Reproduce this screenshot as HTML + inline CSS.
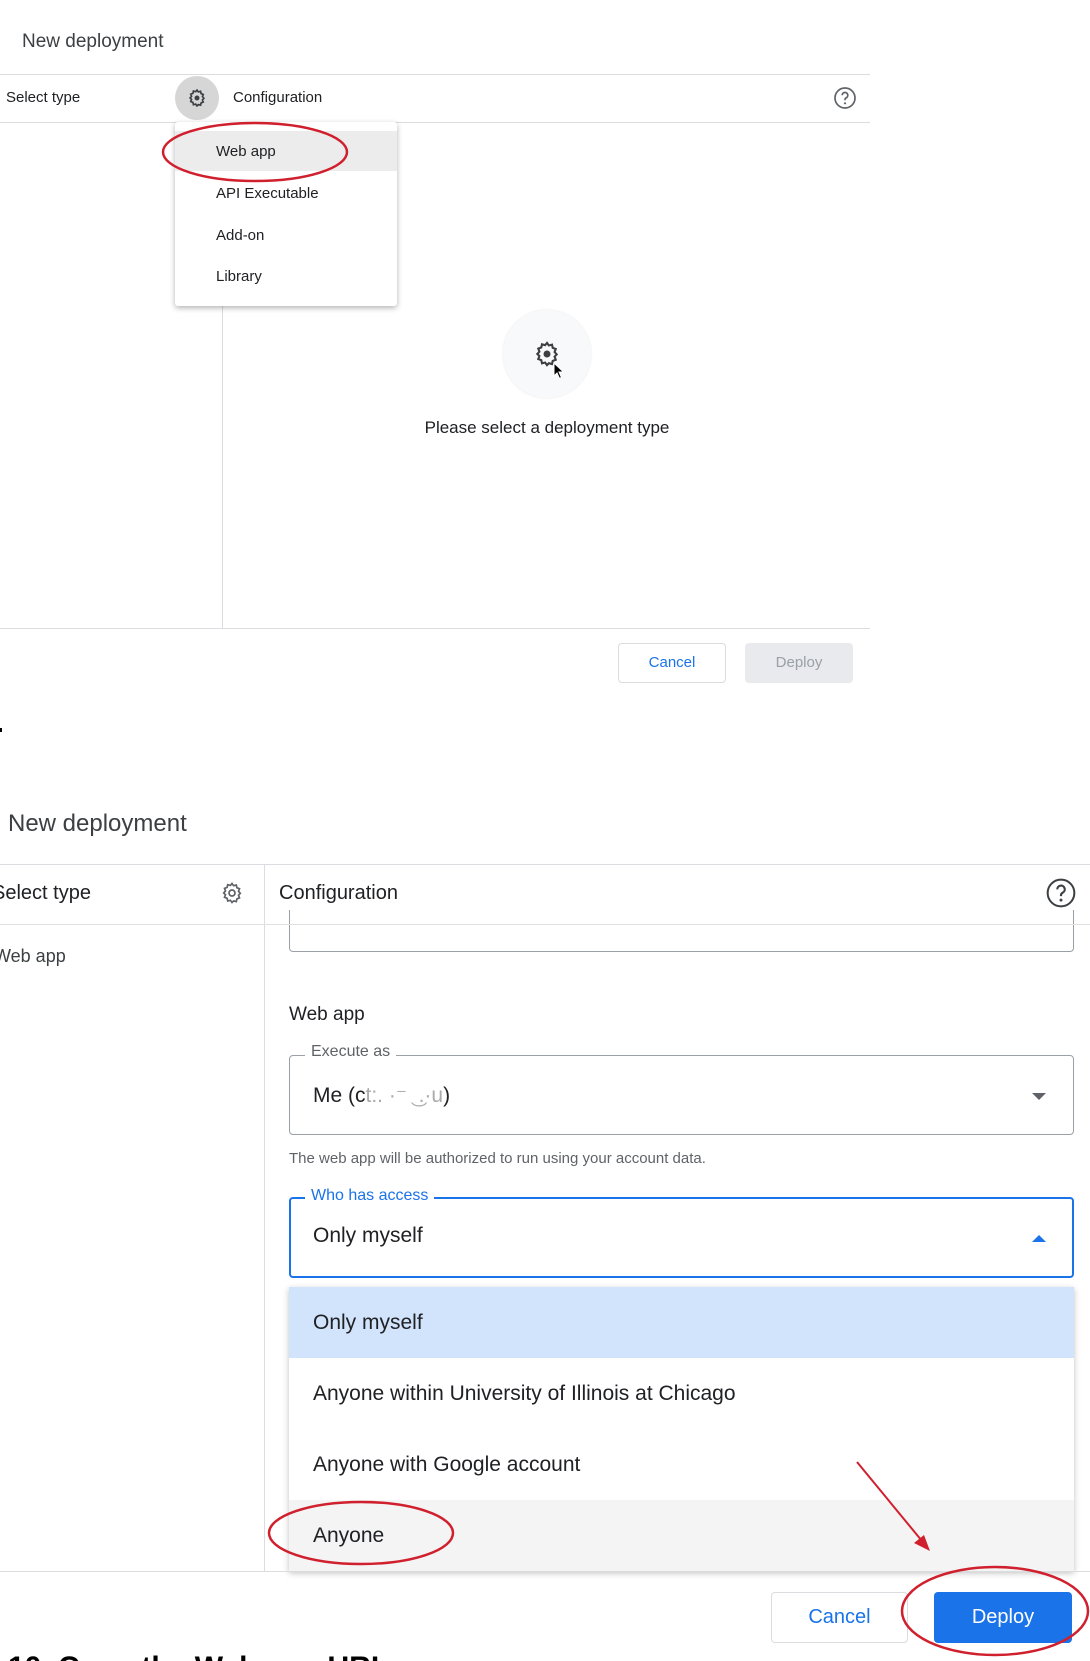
<!DOCTYPE html>
<html style="width:1090px;height:1661px;overflow:hidden"><head><meta charset="utf-8"><style>
*{margin:0;padding:0;box-sizing:border-box}
body{width:1090px;height:1661px;overflow:hidden;background:#fff;font-family:"Liberation Sans",sans-serif;color:#3c4043;position:relative}
.a{position:absolute;white-space:nowrap}
.hl{position:absolute;height:1px;background:#dadce0}
.vl{position:absolute;width:1px;background:#dadce0}
</style></head><body>
<div class="a" style="left:22px;top:31px;font-size:19px;color:#3c4043">New deployment</div>
<div class="hl" style="left:0;top:74px;width:870px"></div>
<div class="a" style="left:6px;top:89px;font-size:15px;color:#202124">Select type</div>
<div class="a" style="left:175px;top:76px;width:44px;height:44px;border-radius:50%;background:#d6d6d6"></div>
<svg class="a" style="left:187px;top:88px" width="20" height="20" viewBox="0 0 24 24"><path fill="none" stroke="#3c4043" stroke-width="2" d="M12 2.5l1.6 2.2 2.7-.7.6 2.7 2.6 1-1 2.6 1.8 2-1.8 2 1 2.6-2.6 1-.6 2.7-2.7-.7L12 21.5l-1.6-2.2-2.7.7-.6-2.7-2.6-1 1-2.6L3.7 12l1.8-2-1-2.6 2.6-1 .6-2.7 2.7.7z"/><circle cx="12" cy="12" r="3" fill="#3c4043"/></svg>
<div class="a" style="left:233px;top:89px;font-size:15px;color:#202124">Configuration</div>
<svg class="a" style="left:833px;top:86px" width="24" height="24" viewBox="0 0 24 24"><circle cx="12" cy="12" r="10" fill="none" stroke="#5f6368" stroke-width="1.7"/><path d="M9.2 9.3a2.8 2.8 0 1 1 4 2.5c-.8.4-1.2 1-1.2 1.9v.6" fill="none" stroke="#5f6368" stroke-width="1.7"/><circle cx="12" cy="17.3" r="1.1" fill="#5f6368"/></svg>
<div class="hl" style="left:0;top:122px;width:870px"></div>
<div class="vl" style="left:222px;top:122px;height:506px"></div>
<div class="a" style="left:175px;top:122px;width:222px;height:184px;background:#fff;box-shadow:0 2px 6px rgba(0,0,0,.3);border-radius:3px"></div>
<div class="a" style="left:175px;top:131px;width:222px;height:40px;background:#ececec"></div>
<div class="a" style="left:216px;top:143px;font-size:15px;color:#202124">Web app</div>
<div class="a" style="left:216px;top:185px;font-size:15px;color:#202124">API Executable</div>
<div class="a" style="left:216px;top:227px;font-size:15px;color:#202124">Add-on</div>
<div class="a" style="left:216px;top:268px;font-size:15px;color:#202124">Library</div>
<div class="a" style="left:503px;top:310px;width:88px;height:88px;border-radius:50%;background:#f8f9fa;box-shadow:0 0 2px rgba(0,0,0,.1)"></div>
<svg class="a" style="left:533px;top:340px" width="28" height="28" viewBox="0 0 24 24"><path fill="none" stroke="#3c4043" stroke-width="1.8" d="M12 2.5l1.6 2.2 2.7-.7.6 2.7 2.6 1-1 2.6 1.8 2-1.8 2 1 2.6-2.6 1-.6 2.7-2.7-.7L12 21.5l-1.6-2.2-2.7.7-.6-2.7-2.6-1 1-2.6L3.7 12l1.8-2-1-2.6 2.6-1 .6-2.7 2.7.7z"/><circle cx="12" cy="12" r="3" fill="#3c4043"/></svg>
<svg class="a" style="left:553px;top:362px" width="12" height="18" viewBox="0 0 12 18"><path d="M1 1v13l3-3 2.5 5.5 2-1L6 10h4.5z" fill="#000" stroke="#fff" stroke-width="1"/></svg>
<div class="a" style="left:347px;top:418px;width:400px;text-align:center;font-size:17px;color:#202124">Please select a deployment type</div>
<div class="hl" style="left:0;top:628px;width:870px"></div>
<div class="a" style="left:618px;top:643px;width:108px;height:40px;border:1px solid #dadce0;border-radius:4px;color:#1a73e8;font-size:15px;text-align:center;line-height:38px">Cancel</div>
<div class="a" style="left:745px;top:643px;width:108px;height:40px;background:#e8eaed;border-radius:4px;color:#9aa0a6;font-size:15px;text-align:center;line-height:40px">Deploy</div>
<div class="a" style="left:0;top:728px;width:2px;height:4px;background:#000"></div>

<div class="a" style="left:8px;top:810px;font-size:24px;color:#3c4043">New deployment</div>
<div class="hl" style="left:0;top:864px;width:1090px"></div>
<div class="a" style="left:-8px;top:882px;font-size:20px;color:#202124">Select type</div>
<svg class="a" style="left:220px;top:881px" width="24" height="24" viewBox="0 0 24 24"><path fill="none" stroke="#5f6368" stroke-width="1.7" d="M12 2.5l1.6 2.2 2.7-.7.6 2.7 2.6 1-1 2.6 1.8 2-1.8 2 1 2.6-2.6 1-.6 2.7-2.7-.7L12 21.5l-1.6-2.2-2.7.7-.6-2.7-2.6-1 1-2.6L3.7 12l1.8-2-1-2.6 2.6-1 .6-2.7 2.7.7z"/><circle cx="12" cy="12" r="3" fill="none" stroke="#5f6368" stroke-width="1.7"/></svg>
<div class="vl" style="left:264px;top:864px;height:707px"></div>
<div class="a" style="left:279px;top:882px;font-size:20px;color:#202124">Configuration</div>
<svg class="a" style="left:1045px;top:877px" width="32" height="32" viewBox="0 0 24 24"><circle cx="12" cy="12" r="10" fill="none" stroke="#3c4043" stroke-width="1.5"/><path d="M9.2 9.3a2.8 2.8 0 1 1 4 2.5c-.8.4-1.2 1-1.2 1.9v.6" fill="none" stroke="#3c4043" stroke-width="1.6"/><circle cx="12" cy="17.3" r="1.1" fill="#3c4043"/></svg>
<div class="a" style="left:289px;top:910px;width:785px;height:42px;border:1px solid #9aa0a6;border-top:none;border-radius:0 0 4px 4px"></div>
<div class="hl" style="left:0;top:924px;width:1090px;background:#e0e0e0"></div>
<div class="a" style="left:-6px;top:946px;font-size:18px;color:#3c4043">Web app</div>
<div class="a" style="left:289px;top:1004px;font-size:19px;color:#202124">Web app</div>
<div class="a" style="left:289px;top:1055px;width:785px;height:80px;border:1px solid #9aa0a6;border-radius:4px"></div>
<div class="a" style="left:305px;top:1043px;padding:0 6px;background:#fff;font-size:16px;color:#5f6368">Execute as</div>
<div class="a" style="left:313px;top:1083px;font-size:21px;color:#202124">Me (c<span style="color:#aaa">t:.  ·⁻  ͜    .·u</span>)</div>
<div class="a" style="left:1032px;top:1093px;width:0;height:0;border-left:7px solid transparent;border-right:7px solid transparent;border-top:7px solid #5f6368"></div>
<div class="a" style="left:289px;top:1150px;font-size:15px;color:#5f6368">The web app will be authorized to run using your account data.</div>
<div class="a" style="left:289px;top:1197px;width:785px;height:81px;border:2px solid #1a73e8;border-radius:4px"></div>
<div class="a" style="left:305px;top:1187px;padding:0 6px;background:#fff;font-size:16px;color:#1a73e8">Who has access</div>
<div class="a" style="left:313px;top:1224px;font-size:21px;color:#202124">Only myself</div>
<div class="a" style="left:1032px;top:1235px;width:0;height:0;border-left:7px solid transparent;border-right:7px solid transparent;border-bottom:7px solid #1a73e8"></div>
<div class="a" style="left:289px;top:1287px;width:785px;height:284px;background:#fff;box-shadow:0 2px 6px rgba(0,0,0,.25)"></div>
<div class="a" style="left:289px;top:1287px;width:785px;height:71px;background:#d2e3fc"></div>
<div class="a" style="left:313px;top:1311px;font-size:21px;color:#202124">Only myself</div>
<div class="a" style="left:313px;top:1382px;font-size:21px;color:#202124">Anyone within University of Illinois at Chicago</div>
<div class="a" style="left:313px;top:1453px;font-size:21px;color:#202124">Anyone with Google account</div>
<div class="a" style="left:289px;top:1500px;width:785px;height:71px;background:#f4f4f4"></div>
<div class="a" style="left:313px;top:1524px;font-size:21px;color:#202124">Anyone</div>
<div class="hl" style="left:0;top:1571px;width:1090px"></div>
<div class="a" style="left:771px;top:1592px;width:137px;height:51px;border:1px solid #dadce0;border-radius:4px;color:#1a73e8;font-size:20px;text-align:center;line-height:49px">Cancel</div>
<div class="a" style="left:934px;top:1592px;width:138px;height:51px;background:#1a73e8;border-radius:4px;color:#fff;font-size:20px;text-align:center;line-height:51px">Deploy</div>
<div class="a" style="left:0;top:1645px;width:700px;height:16px;overflow:hidden"><div class="a" style="left:8px;top:6px;font-size:30px;line-height:34px;font-weight:bold;color:#000">10. Copy the Web app URL</div></div>

<svg class="a" style="left:0;top:0" width="1090" height="1661">
<ellipse cx="255" cy="152" rx="92" ry="29" fill="none" stroke="#d0202e" stroke-width="2.5"/>
<ellipse cx="361" cy="1533" rx="92" ry="31" fill="none" stroke="#d0202e" stroke-width="2.5"/>
<ellipse cx="995" cy="1611" rx="93" ry="44" fill="none" stroke="#d0202e" stroke-width="2.5"/>
<line x1="857" y1="1462" x2="922" y2="1541" stroke="#d0202e" stroke-width="2"/>
<path d="M930 1551l-16-8 10-8z" fill="#d0202e"/>
</svg>
</body></html>
